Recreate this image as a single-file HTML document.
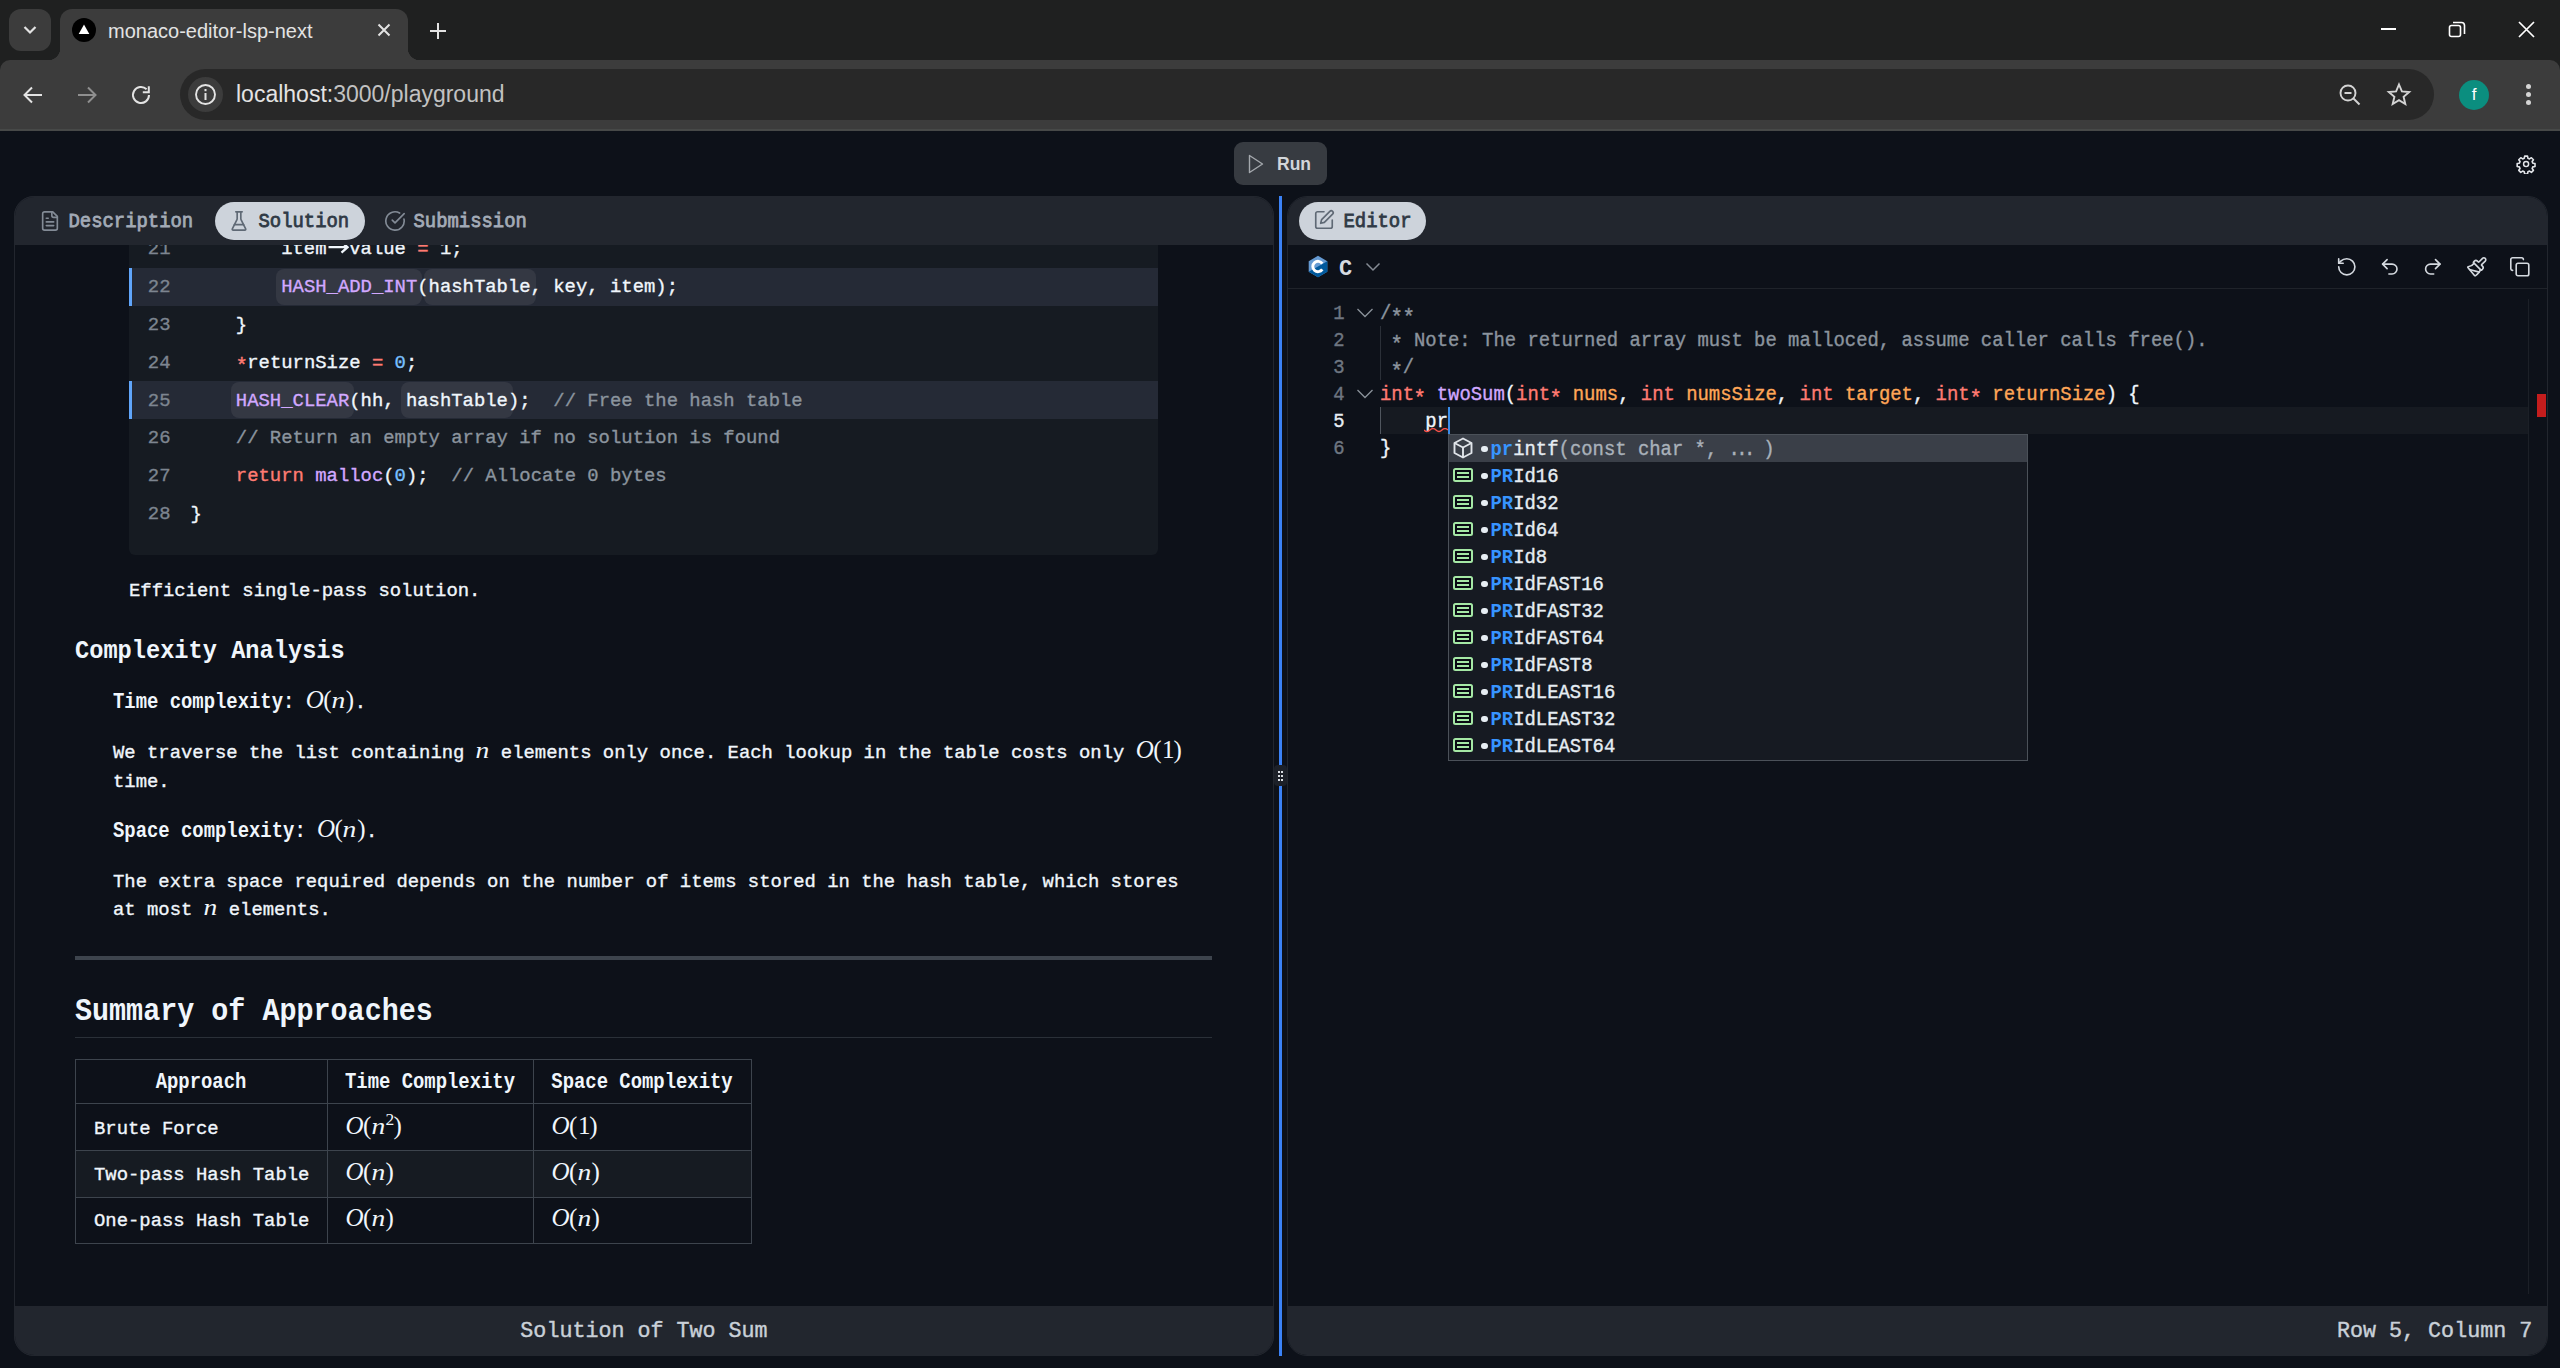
<!DOCTYPE html>
<html><head><meta charset="utf-8">
<style>
*{box-sizing:border-box;margin:0;padding:0}
html,body{width:2560px;height:1368px;overflow:hidden;background:#0d1119;font-family:"Liberation Mono",monospace;color:#e6edf3}
.abs{position:absolute}
svg{display:block}
/* chrome */
#tabstrip{left:0;top:0;width:2560px;height:72px;background:#1f2020}
#toolbar{left:0;top:60px;width:2560px;height:71px;background:#3c3c3c;border-bottom:2px solid #474948;border-radius:10px 10px 0 0}
#tab{left:60px;top:9px;width:348px;height:52px;background:#3c3c3c;border-radius:12px 12px 0 0}
.inv{width:12px;height:12px;background:#3c3c3c}
.sans{font-family:"Liberation Sans",sans-serif}
#omni{left:180px;top:69px;width:2254px;height:51px;background:#282828;border-radius:26px}
/* page */
.panel{background:#0d1119;border:1px solid #22262e;border-radius:20px;overflow:hidden}
.phead{position:absolute;left:0;top:0;right:0;height:48px;background:#22262e}
.pfoot{position:absolute;left:0;bottom:0;right:0;height:50px;background:#22262e}
.tab{position:absolute;top:6px;height:38px;border-radius:19px;font-size:18.9px;line-height:38px;color:#a3abb7;font-weight:bold}
.tab.on{background:#cdd3db;color:#2f3945}

.tl{font-size:18.9px;line-height:38px;color:#a3abb7;white-space:pre;-webkit-text-stroke:0.75px currentColor;transform:scaleY(1.08);transform-origin:0 24px}
.cl{font-size:18.9px;line-height:37.86px;white-space:pre;color:#f0f6fc;-webkit-text-stroke:0.35px currentColor}
.ln{color:#7d8590}
.md{color:#f0f6fc;white-space:pre;-webkit-text-stroke:0.35px currentColor}
.md b,.b{-webkit-text-stroke:0}
.math{-webkit-text-stroke:0;line-height:0}
.b{font-weight:bold}
.math{font-family:"Liberation Serif",serif;white-space:nowrap}
.ec{font-size:18.9px;line-height:27px;white-space:pre;padding-top:2px;-webkit-text-stroke:0.35px currentColor;transform:scaleY(1.08);transform-origin:0 20.5px}
.mono{font-family:"Liberation Mono",monospace}
.ast{position:relative;top:4px;display:inline-block;transform:scale(1.1)}
</style></head>
<body>
<!-- browser chrome -->
<div id="tabstrip" class="abs"></div>
<div id="toolbar" class="abs"></div>
<div class="abs" style="left:9px;top:9px;width:42px;height:42px;background:#3c3c3c;border-radius:12px"></div>
<svg class="abs" style="left:22px;top:24px" width="16" height="12" viewBox="0 0 16 12"><path d="M2.5 3 L8 8.5 L13.5 3" fill="none" stroke="#e3e3e3" stroke-width="2.2"/></svg>
<div id="tab" class="abs"></div>
<div class="abs" style="left:48px;top:48px;width:12px;height:12px;background:radial-gradient(circle at 0 0,transparent 12px,#3c3c3c 12.5px)"></div>
<div class="abs" style="left:408px;top:48px;width:12px;height:12px;background:radial-gradient(circle at 100% 0,transparent 12px,#3c3c3c 12.5px)"></div>
<svg class="abs" style="left:72px;top:18px" width="24" height="24" viewBox="0 0 24 24"><circle cx="12" cy="12" r="12" fill="#000"/><path d="M12 6.5 L17.3 16 L6.7 16 Z" fill="#fff"/></svg>
<div class="abs sans" style="left:108px;top:19px;font-size:20px;line-height:24px;color:#e3e3e3">monaco-editor-lsp-next</div>
<svg class="abs" style="left:377px;top:23px" width="14" height="14" viewBox="0 0 14 14"><path d="M1.5 1.5 L12.5 12.5 M12.5 1.5 L1.5 12.5" stroke="#e3e3e3" stroke-width="2"/></svg>
<svg class="abs" style="left:429px;top:22px" width="18" height="18" viewBox="0 0 18 18"><path d="M9 1 V17 M1 9 H17" stroke="#e3e3e3" stroke-width="2"/></svg>
<!-- window controls -->
<div class="abs" style="left:2381px;top:28px;width:15px;height:2px;background:#fff"></div>
<svg class="abs" style="left:2447px;top:20px" width="20" height="20" viewBox="0 0 20 20"><rect x="2.5" y="5.5" width="11" height="11" rx="2" fill="none" stroke="#fff" stroke-width="1.6"/><path d="M6 2.5 H14.5 A3 3 0 0 1 17.5 5.5 V14" fill="none" stroke="#fff" stroke-width="1.6"/></svg>
<svg class="abs" style="left:2517px;top:20px" width="19" height="19" viewBox="0 0 19 19"><path d="M2 2 L17 17 M17 2 L2 17" stroke="#fff" stroke-width="1.7"/></svg>
<!-- nav -->
<svg class="abs" style="left:21px;top:83px" width="24" height="24" viewBox="0 0 24 24"><path d="M21 12 H4 M11 4.5 L3.5 12 L11 19.5" fill="none" stroke="#e3e3e3" stroke-width="2"/></svg>
<svg class="abs" style="left:75px;top:83px" width="24" height="24" viewBox="0 0 24 24"><path d="M3 12 H20 M13 4.5 L20.5 12 L13 19.5" fill="none" stroke="#8f8f8f" stroke-width="2"/></svg>
<svg class="abs" style="left:129px;top:83px" width="24" height="24" viewBox="0 0 24 24"><path d="M20 12 A8 8 0 1 1 17.6 6.3" fill="none" stroke="#e3e3e3" stroke-width="2"/><path d="M19.8 3.2 V9.2 H13.8" fill="none" stroke="#e3e3e3" stroke-width="2"/></svg>
<div id="omni" class="abs"></div>
<div class="abs" style="left:188px;top:77px;width:35px;height:35px;border-radius:18px;background:#3c3c3c"></div>
<svg class="abs" style="left:193px;top:82px" width="25" height="25" viewBox="0 0 25 25"><circle cx="12.5" cy="12.5" r="9.5" fill="none" stroke="#e3e3e3" stroke-width="1.9"/><rect x="11.5" y="11" width="2" height="7" fill="#e3e3e3"/><rect x="11.5" y="7" width="2" height="2.2" fill="#e3e3e3"/></svg>
<div class="abs sans" style="left:236px;top:81px;font-size:23px;line-height:26px;color:#e3e3e3">localhost:<span style="color:#c2c2c2">3000/playground</span></div>
<svg class="abs" style="left:2336px;top:81px" width="26" height="26" viewBox="0 0 26 26"><circle cx="12" cy="12" r="7.5" fill="none" stroke="#d4d4d4" stroke-width="1.9"/><path d="M8.5 12 H15.5" stroke="#d4d4d4" stroke-width="2"/><path d="M17.5 17.5 L23.5 23.5" stroke="#d4d4d4" stroke-width="2"/></svg>
<svg class="abs" style="left:2386px;top:82px" width="26" height="26" viewBox="0 0 26 26"><path d="M13 2.5 L15.9 9.4 L23.2 10 L17.6 14.8 L19.3 22 L13 18.1 L6.7 22 L8.4 14.8 L2.8 10 L10.1 9.4 Z" fill="none" stroke="#d4d4d4" stroke-width="1.9" stroke-linejoin="miter"/></svg>
<div class="abs" style="left:2459px;top:80px;width:30px;height:30px;border-radius:15px;background:#0b8e7f"></div>
<div class="abs sans" style="left:2459px;top:83px;width:30px;text-align:center;font-size:17px;line-height:24px;color:#fff">f</div>
<div class="abs" style="left:2526px;top:84px;width:5px;height:5px;border-radius:3px;background:#d4d4d4"></div>
<div class="abs" style="left:2526px;top:92px;width:5px;height:5px;border-radius:3px;background:#d4d4d4"></div>
<div class="abs" style="left:2526px;top:100px;width:5px;height:5px;border-radius:3px;background:#d4d4d4"></div>

<!-- page top bar -->
<div class="abs" style="left:1234px;top:142px;width:93px;height:43px;border-radius:9px;background:#373b41"></div>
<svg class="abs" style="left:1246px;top:153px" width="20" height="22" viewBox="0 0 20 22"><path d="M3.5 2.5 L16.5 11 L3.5 19.5 Z" fill="none" stroke="#a4a8ad" stroke-width="1.4" stroke-linejoin="round"/></svg>
<div class="abs sans" style="left:1277px;top:151px;font-size:17.5px;line-height:26px;font-weight:bold;color:#d2d6da">Run</div>
<svg class="abs" style="left:2515.8px;top:153.9px" width="20.2" height="20.2" viewBox="0 0 24 24"><path fill="none" stroke="#e2e5e9" stroke-width="1.9" stroke-linejoin="round" d="M10.3 2.5h3.4l.5 2.6 1.9.8 2.2-1.5 2.4 2.4-1.5 2.2.8 1.9 2.6.5v3.4l-2.6.5-.8 1.9 1.5 2.2-2.4 2.4-2.2-1.5-1.9.8-.5 2.6h-3.4l-.5-2.6-1.9-.8-2.2 1.5-2.4-2.4 1.5-2.2-.8-1.9-2.6-.5v-3.4l2.6-.5.8-1.9-1.5-2.2 2.4-2.4 2.2 1.5 1.9-.8z"/><circle cx="12" cy="12" r="3" fill="none" stroke="#e2e5e9" stroke-width="1.7"/></svg>

<!-- LEFT PANEL -->
<div id="lp" class="abs panel" style="left:14px;top:196px;width:1260px;height:1160px"></div>
<div class="abs" style="left:15px;top:197px;width:1258px;height:48px;background:#22262e;border-radius:19px 19px 0 0"></div>
<div class="abs" style="left:15px;top:1306px;width:1258px;height:49px;background:#22262e;border-radius:0 0 19px 19px"></div>
<div class="abs" style="left:14px;top:196px;width:1260px;height:1160px;border-radius:20px;border:1px solid #22262e;pointer-events:none"></div>
<!-- left tabs -->
<svg class="abs" style="left:39px;top:210px" width="22" height="22" viewBox="0 0 24 24" fill="none" stroke="#838b96" stroke-width="1.8" stroke-linecap="round" stroke-linejoin="round"><path d="M15 2H6a2 2 0 0 0-2 2v16a2 2 0 0 0 2 2h12a2 2 0 0 0 2-2V7Z"/><path d="M14 2v4a2 2 0 0 0 2 2h4"/><path d="M10 9H8"/><path d="M16 13H8"/><path d="M16 17H8"/></svg>
<div class="abs tl" style="left:68.5px;top:203px">Description</div>
<div class="abs" style="left:215px;top:202px;width:150px;height:38px;border-radius:19px;background:#cdd3db"></div>
<svg class="abs" style="left:228px;top:209.75px" width="22" height="22" viewBox="0 0 24 24" fill="none" stroke="#5f6975" stroke-width="1.8" stroke-linecap="round" stroke-linejoin="round"><path d="M10 2v7.527a2 2 0 0 1-.211.896L4.72 20.55a1 1 0 0 0 .9 1.45h12.76a1 1 0 0 0 .9-1.45l-5.069-10.127A2 2 0 0 1 14 9.527V2"/><path d="M8.5 2h7"/><path d="M7 16h10"/></svg>
<div class="abs tl" style="left:258.5px;top:203px;color:#2f3945">Solution</div>
<svg class="abs" style="left:383.5px;top:210px" width="22" height="22" viewBox="0 0 24 24" fill="none" stroke="#838b96" stroke-width="1.8" stroke-linecap="round" stroke-linejoin="round"><path d="M21.801 10A10 10 0 1 1 17 3.335"/><path d="m9 11 3 3L22 4"/></svg>
<div class="abs tl" style="left:413.5px;top:203px">Submission</div>
<!-- left content clip -->
<div class="abs" style="left:15px;top:245px;width:1258px;height:1061px;overflow:hidden">
<div class="abs" style="left:-15px;top:-245px;width:2560px;height:1368px">
<div class="abs" style="left:129px;top:200px;width:1029px;height:355px;background:#161b22;border-radius:6px"></div>
<div class="abs" style="left:129px;top:267.66px;width:1029px;height:37.86px;background:#252a36"></div>
<div class="abs" style="left:129px;top:267.66px;width:2.5px;height:37.86px;background:#60a5fa"></div>
<div class="abs" style="left:129px;top:381.24px;width:1029px;height:37.86px;background:#252a36"></div>
<div class="abs" style="left:129px;top:381.24px;width:2.5px;height:37.86px;background:#60a5fa"></div>
<div class="abs" style="left:276.22px;top:268.66px;width:146.08px;height:35.86px;background:#343843;border-radius:8px"></div>
<div class="abs" style="left:423.64px;top:268.66px;width:112.06px;height:35.86px;background:#343843;border-radius:8px"></div>
<div class="abs" style="left:230.86px;top:382.24px;width:123.40px;height:35.86px;background:#343843;border-radius:8px"></div>
<div class="abs" style="left:400.96px;top:382.24px;width:112.06px;height:35.86px;background:#343843;border-radius:8px"></div>
<div class="abs cl ln" style="left:120px;top:231.10px;width:50.5px;text-align:right">21</div>
<div class="abs cl" style="left:190.5px;top:231.10px"><span style="color:#f0f6fc">        item</span><svg style="display:inline-block;vertical-align:0px" width="22.68" height="14" viewBox="0 0 22.68 14"><path d="M1.5 7.2 H20.5 M14.5 1.8 L20.5 7.2 L14.5 12.6" fill="none" stroke="#f0f6fc" stroke-width="2.3"/></svg><span style="color:#f0f6fc">value </span><span style="color:#ff7b72">=</span><span style="color:#f0f6fc"> 1;</span></div>
<div class="abs cl ln" style="left:120px;top:268.96px;width:50.5px;text-align:right">22</div>
<div class="abs cl" style="left:190.5px;top:268.96px"><span style="color:#f0f6fc">        </span><span style="color:#d2a8ff">HASH_ADD_INT</span><span style="color:#f0f6fc">(hashTable, key, item);</span></div>
<div class="abs cl ln" style="left:120px;top:306.82px;width:50.5px;text-align:right">23</div>
<div class="abs cl" style="left:190.5px;top:306.82px"><span style="color:#f0f6fc">    }</span></div>
<div class="abs cl ln" style="left:120px;top:344.68px;width:50.5px;text-align:right">24</div>
<div class="abs cl" style="left:190.5px;top:344.68px"><span style="color:#f0f6fc">    </span><span style="color:#ff7b72"><span class="ast">*</span></span><span style="color:#f0f6fc">returnSize </span><span style="color:#ff7b72">=</span><span style="color:#f0f6fc"> </span><span style="color:#79c0ff">0</span><span style="color:#f0f6fc">;</span></div>
<div class="abs cl ln" style="left:120px;top:382.54px;width:50.5px;text-align:right">25</div>
<div class="abs cl" style="left:190.5px;top:382.54px"><span style="color:#f0f6fc">    </span><span style="color:#d2a8ff">HASH_CLEAR</span><span style="color:#f0f6fc">(hh, hashTable);  </span><span style="color:#8b949e">// Free the hash table</span></div>
<div class="abs cl ln" style="left:120px;top:420.40px;width:50.5px;text-align:right">26</div>
<div class="abs cl" style="left:190.5px;top:420.40px"><span style="color:#f0f6fc">    </span><span style="color:#8b949e">// Return an empty array if no solution is found</span></div>
<div class="abs cl ln" style="left:120px;top:458.26px;width:50.5px;text-align:right">27</div>
<div class="abs cl" style="left:190.5px;top:458.26px"><span style="color:#f0f6fc">    </span><span style="color:#ff7b72">return</span><span style="color:#f0f6fc"> </span><span style="color:#d2a8ff">malloc</span><span style="color:#f0f6fc">(</span><span style="color:#79c0ff">0</span><span style="color:#f0f6fc">);  </span><span style="color:#8b949e">// Allocate 0 bytes</span></div>
<div class="abs cl ln" style="left:120px;top:496.12px;width:50.5px;text-align:right">28</div>
<div class="abs cl" style="left:190.5px;top:496.12px"><span style="color:#f0f6fc">}</span></div>
<div class="abs md" style="left:129px;top:576.77px;font-size:18.9px;line-height:28.4px;">Efficient single-pass solution.</div>
<div class="abs md b" style="left:75px;top:637.40px;font-size:23.66px;line-height:30px;transform:scaleY(1.12);transform-origin:0 21.30px;">Complexity Analysis</div>
<div class="abs md" style="left:113px;top:689.47px;font-size:18.9px;line-height:28.4px;"><b style="display:inline-block;transform:scaleY(1.12);transform-origin:0 19.23px">Time complexity:</b> <span class="math" style="font-size:25px"><span style="display:inline-block;width:17.47px;font-style:italic;">O</span><span style="display:inline-block;width:8.91px;">(</span><span style="display:inline-block;width:13.74px;font-style:italic;transform:scale(1.1,0.95);transform-origin:30% 80%;">n</span><span style="display:inline-block;width:8.91px;">)</span></span>.</div>
<div class="abs md" style="left:113px;top:739.27px;font-size:18.9px;line-height:28.4px;">We traverse the list containing <span class="math" style="font-size:25px"><span style="display:inline-block;width:13.74px;font-style:italic;transform:scale(1.1,0.95);transform-origin:30% 80%;">n</span></span> elements only once. Each lookup in the table costs only <span class="math" style="font-size:25px"><span style="display:inline-block;width:17.47px;font-style:italic;">O</span><span style="display:inline-block;width:8.91px;">(</span><span style="display:inline-block;width:11.45px;">1</span><span style="display:inline-block;width:8.91px;">)</span></span></div>
<div class="abs md" style="left:113px;top:767.67px;font-size:18.9px;line-height:28.4px;">time.</div>
<div class="abs md" style="left:113px;top:818.27px;font-size:18.9px;line-height:28.4px;"><b style="display:inline-block;transform:scaleY(1.12);transform-origin:0 19.23px">Space complexity:</b> <span class="math" style="font-size:25px"><span style="display:inline-block;width:17.47px;font-style:italic;">O</span><span style="display:inline-block;width:8.91px;">(</span><span style="display:inline-block;width:13.74px;font-style:italic;transform:scale(1.1,0.95);transform-origin:30% 80%;">n</span><span style="display:inline-block;width:8.91px;">)</span></span>.</div>
<div class="abs md" style="left:113px;top:867.57px;font-size:18.9px;line-height:28.4px;">The extra space required depends on the number of items stored in the hash table, which stores</div>
<div class="abs md" style="left:113px;top:895.67px;font-size:18.9px;line-height:28.4px;">at most <span class="math" style="font-size:25px"><span style="display:inline-block;width:13.74px;font-style:italic;transform:scale(1.1,0.95);transform-origin:30% 80%;">n</span></span> elements.</div>
<div class="abs" style="left:75px;top:956px;width:1137px;height:4px;background:#3d444d"></div>
<div class="abs md b" style="left:75px;top:994.94px;font-size:28.4px;line-height:36px;transform:scaleY(1.12);transform-origin:0 25.56px;">Summary of Approaches</div>
<div class="abs" style="left:75px;top:1037px;width:1137px;height:1px;background:#2a3038"></div>
<div class="abs" style="left:76px;top:1151px;width:675px;height:46px;background:#161b22"></div>
<div class="abs" style="left:75px;top:1059px;width:677px;height:1px;background:#3d444d"></div>
<div class="abs" style="left:75px;top:1103px;width:677px;height:1px;background:#3d444d"></div>
<div class="abs" style="left:75px;top:1150px;width:677px;height:1px;background:#3d444d"></div>
<div class="abs" style="left:75px;top:1197px;width:677px;height:1px;background:#3d444d"></div>
<div class="abs" style="left:75px;top:1243px;width:677px;height:1px;background:#3d444d"></div>
<div class="abs" style="left:75px;top:1059px;width:1px;height:185px;background:#3d444d"></div>
<div class="abs" style="left:327px;top:1059px;width:1px;height:185px;background:#3d444d"></div>
<div class="abs" style="left:533px;top:1059px;width:1px;height:185px;background:#3d444d"></div>
<div class="abs" style="left:751px;top:1059px;width:1px;height:185px;background:#3d444d"></div>
<div class="abs md b" style="left:75px;top:1069.17px;font-size:18.9px;line-height:28.4px;transform:scaleY(1.12);transform-origin:0 19.23px;"><div style="width:252px;text-align:center">Approach</div></div>
<div class="abs md b" style="left:345px;top:1069.17px;font-size:18.9px;line-height:28.4px;transform:scaleY(1.12);transform-origin:0 19.23px;">Time Complexity</div>
<div class="abs md b" style="left:551.3px;top:1069.17px;font-size:18.9px;line-height:28.4px;transform:scaleY(1.12);transform-origin:0 19.23px;">Space Complexity</div>
<div class="abs md" style="left:94px;top:1114.52px;font-size:18.9px;line-height:28.4px;">Brute Force</div>
<div class="abs md" style="left:345.5px;top:1114.52px;font-size:18.9px;line-height:28.4px;"><span class="math" style="font-size:25px"><span style="display:inline-block;width:17.47px;font-style:italic;">O</span><span style="display:inline-block;width:8.91px;">(</span><span style="display:inline-block;width:13.74px;font-style:italic;transform:scale(1.1,0.95);transform-origin:30% 80%;">n</span><span style="display:inline-block;width:8.01px;font-style:normal;"><span style="font-size:0.7em;position:relative;top:-0.5em">2</span></span><span style="display:inline-block;width:8.91px;">)</span></span></div>
<div class="abs md" style="left:551.5px;top:1114.52px;font-size:18.9px;line-height:28.4px;"><span class="math" style="font-size:25px"><span style="display:inline-block;width:17.47px;font-style:italic;">O</span><span style="display:inline-block;width:8.91px;">(</span><span style="display:inline-block;width:11.45px;">1</span><span style="display:inline-block;width:8.91px;">)</span></span></div>
<div class="abs md" style="left:94px;top:1161.07px;font-size:18.9px;line-height:28.4px;">Two-pass Hash Table</div>
<div class="abs md" style="left:345.5px;top:1161.07px;font-size:18.9px;line-height:28.4px;"><span class="math" style="font-size:25px"><span style="display:inline-block;width:17.47px;font-style:italic;">O</span><span style="display:inline-block;width:8.91px;">(</span><span style="display:inline-block;width:13.74px;font-style:italic;transform:scale(1.1,0.95);transform-origin:30% 80%;">n</span><span style="display:inline-block;width:8.91px;">)</span></span></div>
<div class="abs md" style="left:551.5px;top:1161.07px;font-size:18.9px;line-height:28.4px;"><span class="math" style="font-size:25px"><span style="display:inline-block;width:17.47px;font-style:italic;">O</span><span style="display:inline-block;width:8.91px;">(</span><span style="display:inline-block;width:13.74px;font-style:italic;transform:scale(1.1,0.95);transform-origin:30% 80%;">n</span><span style="display:inline-block;width:8.91px;">)</span></span></div>
<div class="abs md" style="left:94px;top:1207.37px;font-size:18.9px;line-height:28.4px;">One-pass Hash Table</div>
<div class="abs md" style="left:345.5px;top:1207.37px;font-size:18.9px;line-height:28.4px;"><span class="math" style="font-size:25px"><span style="display:inline-block;width:17.47px;font-style:italic;">O</span><span style="display:inline-block;width:8.91px;">(</span><span style="display:inline-block;width:13.74px;font-style:italic;transform:scale(1.1,0.95);transform-origin:30% 80%;">n</span><span style="display:inline-block;width:8.91px;">)</span></span></div>
<div class="abs md" style="left:551.5px;top:1207.37px;font-size:18.9px;line-height:28.4px;"><span class="math" style="font-size:25px"><span style="display:inline-block;width:17.47px;font-style:italic;">O</span><span style="display:inline-block;width:8.91px;">(</span><span style="display:inline-block;width:13.74px;font-style:italic;transform:scale(1.1,0.95);transform-origin:30% 80%;">n</span><span style="display:inline-block;width:8.91px;">)</span></span></div>
</div></div>
<div class="abs mono" style="left:14px;top:1306px;width:1260px;height:52px;text-align:center;font-size:21.7px;line-height:52px;color:#c9d0d8;-webkit-text-stroke:0.4px currentColor">Solution of Two Sum</div>

<!-- divider -->
<div class="abs" style="left:1279px;top:196px;width:3px;height:1160px;background:#3b82f6"></div>
<div class="abs" style="left:1274px;top:765px;width:13px;height:21px;border-radius:4px;background:#1c2028"></div>
<div class="abs" style="left:1278px;top:771px;width:2px;height:2px;background:#d8dce2;box-shadow:3px 0 #d8dce2,0 4px #d8dce2,3px 4px #d8dce2,0 8px #d8dce2,3px 8px #d8dce2"></div>

<!-- RIGHT PANEL -->
<div id="rp" class="abs panel" style="left:1287px;top:196px;width:1261px;height:1160px"></div>
<div class="abs" style="left:1288px;top:197px;width:1259px;height:48px;background:#22262e;border-radius:19px 19px 0 0"></div>
<div class="abs" style="left:1288px;top:1306px;width:1259px;height:49px;background:#22262e;border-radius:0 0 19px 19px"></div>
<div class="abs mono" style="left:2337px;top:1306px;width:200px;height:52px;font-size:21.7px;line-height:52px;color:#c9d0d8;-webkit-text-stroke:0.4px currentColor">Row 5, Column 7</div>
<div class="abs" style="left:1299px;top:202px;width:127px;height:38px;border-radius:19px;background:#cdd3db"></div>
<svg class="abs" style="left:1313.25px;top:209.3px" width="22" height="22" viewBox="0 0 24 24" fill="none" stroke="#5f6975" stroke-width="1.8" stroke-linecap="round" stroke-linejoin="round"><path d="M12 3H5a2 2 0 0 0-2 2v14a2 2 0 0 0 2 2h14a2 2 0 0 0 2-2v-7"/><path d="M18.375 2.625a1 1 0 0 1 3 3l-9 9-4 1 1-4Z"/></svg>
<div class="abs tl" style="left:1343.5px;top:203px;color:#2f3945">Editor</div>
<div class="abs" style="left:1288px;top:288px;width:1259px;height:1px;background:#1f232a"></div>
<svg class="abs" style="left:1307px;top:255px" width="22" height="23" viewBox="0 0 22 23"><path d="M11 0.8 L20.3 6.2 V16.8 L11 22.2 L1.7 16.8 V6.2 Z" fill="#659ad2"/><path d="M20.3 6.2 V16.8 L11 22.2 L1.7 16.8 Z" fill="#00599c"/><path d="M15.3 8.6 A5.2 5.2 0 1 0 15.3 14.4" fill="none" stroke="#fff" stroke-width="2.9"/></svg>
<div class="abs mono" style="left:1339px;top:254.5px;font-size:22px;line-height:30px;font-weight:bold;color:#d6dbe1">C</div>
<svg class="abs" style="left:1365px;top:261px" width="16" height="12" viewBox="0 0 16 12"><path d="M1.5 2.5 L8 9 L14.5 2.5" fill="none" stroke="#858b94" stroke-width="1.5"/></svg>
<svg class="abs" style="left:2335.8px;top:255.9px" width="21.6" height="21.6" viewBox="0 0 24 24" fill="none" stroke="#d4d9df" stroke-width="1.8" stroke-linecap="round" stroke-linejoin="round"><path d="M3 12a9 9 0 1 0 9-9 9.75 9.75 0 0 0-6.74 2.74L3 8"/><path d="M3 3v5h5"/></svg>
<svg class="abs" style="left:2379px;top:255.9px" width="21.6" height="21.6" viewBox="0 0 24 24" fill="none" stroke="#d4d9df" stroke-width="1.8" stroke-linecap="round" stroke-linejoin="round"><path d="M9 14 4 9l5-5"/><path d="M4 9h10.5a5.5 5.5 0 0 1 5.5 5.5a5.5 5.5 0 0 1-5.5 5.5H11"/></svg>
<svg class="abs" style="left:2421.9px;top:255.9px" width="21.6" height="21.6" viewBox="0 0 24 24" fill="none" stroke="#d4d9df" stroke-width="1.8" stroke-linecap="round" stroke-linejoin="round"><path d="m15 14 5-5-5-5"/><path d="M20 9H9.5A5.5 5.5 0 0 0 4 14.5A5.5 5.5 0 0 0 9.5 20H13"/></svg>
<svg class="abs" style="left:2466.2px;top:255.9px" width="21.6" height="21.6" viewBox="0 0 24 24" fill="none" stroke="#d4d9df" stroke-width="1.8" stroke-linecap="round" stroke-linejoin="round"><path d="m14.622 17.897-10.68-2.913"/><path d="M18.376 2.622a1 1 0 1 1 3.002 3.002L17.36 9.643a.5.5 0 0 0 0 .707l.944.944a2.41 2.41 0 0 1 0 3.408l-.944.944a.5.5 0 0 1-.707 0L8.354 7.348a.5.5 0 0 1 0-.707l.944-.944a2.41 2.41 0 0 1 3.408 0l.944.944a.5.5 0 0 0 .707 0z"/><path d="M9 8c-1.804 2.71-3.97 3.46-6.583 3.948a.507.507 0 0 0-.302.819l7.32 8.883a1 1 0 0 0 1.185.204C12.735 20.405 16 16.792 16 15"/></svg>
<svg class="abs" style="left:2509.2px;top:255.9px" width="21.6" height="21.6" viewBox="0 0 24 24" fill="none" stroke="#d4d9df" stroke-width="1.8" stroke-linecap="round" stroke-linejoin="round"><rect width="14" height="14" x="8" y="8" rx="2" ry="2"/><path d="M4 16c-1.1 0-2-.9-2-2V4c0-1.1.9-2 2-2h10c1.1 0 2 .9 2 2"/></svg>
<div class="abs" style="left:1380px;top:407px;width:1148px;height:27px;background:#161a21"></div>
<div class="abs" style="left:1380px;top:326px;width:1px;height:54px;background:#2b3038"></div>
<div class="abs" style="left:1380px;top:407px;width:1px;height:27px;background:#50565e"></div>
<div class="abs ec" style="left:1300px;top:299px;width:44.5px;text-align:right;color:#6e7681">1</div>
<div class="abs ec" style="left:1300px;top:326px;width:44.5px;text-align:right;color:#6e7681">2</div>
<div class="abs ec" style="left:1300px;top:353px;width:44.5px;text-align:right;color:#6e7681">3</div>
<div class="abs ec" style="left:1300px;top:380px;width:44.5px;text-align:right;color:#6e7681">4</div>
<div class="abs ec" style="left:1300px;top:407px;width:44.5px;text-align:right;color:#e6edf3">5</div>
<div class="abs ec" style="left:1300px;top:434px;width:44.5px;text-align:right;color:#6e7681">6</div>
<svg class="abs" style="left:1356px;top:307px" width="18" height="12" viewBox="0 0 18 12"><path d="M1.5 2 L9 9.5 L16.5 2" fill="none" stroke="#8b929a" stroke-width="1.3"/></svg>
<svg class="abs" style="left:1356px;top:388px" width="18" height="12" viewBox="0 0 18 12"><path d="M1.5 2 L9 9.5 L16.5 2" fill="none" stroke="#8b929a" stroke-width="1.3"/></svg>
<div class="abs ec" style="left:1380px;top:299px"><span style="color:#8b949e">/<span class="ast">*</span><span class="ast">*</span></span></div>
<div class="abs ec" style="left:1380px;top:326px"><span style="color:#8b949e"> <span class="ast">*</span> Note: The returned array must be malloced, assume caller calls free().</span></div>
<div class="abs ec" style="left:1380px;top:353px"><span style="color:#8b949e"> <span class="ast">*</span>/</span></div>
<div class="abs ec" style="left:1380px;top:380px"><span style="color:#ff7b72">int<span class="ast">*</span></span><span style="color:#f0f6fc"> </span><span style="color:#d2a8ff">twoSum</span><span style="color:#f0f6fc">(</span><span style="color:#ff7b72">int<span class="ast">*</span></span><span style="color:#ffa657"> nums</span><span style="color:#f0f6fc">, </span><span style="color:#ff7b72">int</span><span style="color:#ffa657"> numsSize</span><span style="color:#f0f6fc">, </span><span style="color:#ff7b72">int</span><span style="color:#ffa657"> target</span><span style="color:#f0f6fc">, </span><span style="color:#ff7b72">int<span class="ast">*</span></span><span style="color:#ffa657"> returnSize</span><span style="color:#f0f6fc">) {</span></div>
<div class="abs ec" style="left:1380px;top:407px"><span style="color:#f0f6fc">    pr</span></div>
<div class="abs ec" style="left:1380px;top:434px"><span style="color:#f0f6fc">}</span></div>
<svg class="abs" style="left:1424px;top:428px" width="24" height="6" viewBox="0 0 24 6"><path d="M0 2 Q3 5 6 2 T12 2 T18 2 T24 2" fill="none" stroke="#f85149" stroke-width="1.3"/></svg>
<div class="abs" style="left:1447.5px;top:407px;width:2px;height:27px;background:#3b8eea"></div>
<div class="abs" style="left:2528px;top:299px;width:1px;height:995px;background:#1c2027"></div>
<div class="abs" style="left:2537px;top:394px;width:9px;height:23px;background:#c41d1d"></div>
<div class="abs" style="left:1448px;top:434px;width:580px;height:327px;background:#161a22;border:1px solid #4b5159"></div>
<div class="abs" style="left:1449px;top:435px;width:578px;height:27px;background:#3a3f48"></div>
<svg class="abs" style="left:1451px;top:436px" width="24" height="24" viewBox="0 0 24 24" fill="none" stroke="#e1e5ea" stroke-width="1.9" stroke-linejoin="round"><path d="M12 2.5 L20.5 7 V17 L12 21.5 L3.5 17 V7 Z"/><path d="M3.5 7 L12 11.5 L20.5 7"/><path d="M12 11.5 V21.5"/></svg>
<div class="abs" style="left:1481px;top:445.5px;width:6.5px;height:6.5px;border-radius:50%;background:#e6edf3"></div>
<div class="abs ec sg" style="left:1490.5px;top:435px"><span style="color:#3794ff;font-weight:bold;-webkit-text-stroke:0">pr</span><span style="color:#e6edf3">intf</span><span style="color:#a9b1ba">(const char *, <span style="letter-spacing:-3.6px">...</span> )</span></div>
<div class="abs" style="left:1453px;top:468px;width:20px;height:14px;border:2px solid #a5e8a5;border-radius:2.5px;background:#0a0b14"></div>
<div class="abs" style="left:1457px;top:472px;width:12px;height:2px;background:#a5e8a5;box-shadow:0 4px #a5e8a5"></div>
<div class="abs" style="left:1481px;top:472.5px;width:6.5px;height:6.5px;border-radius:50%;background:#e6edf3"></div>
<div class="abs ec sg" style="left:1490.5px;top:462px"><span style="color:#3794ff;font-weight:bold;-webkit-text-stroke:0">PR</span><span style="color:#e6edf3">Id16</span></div>
<div class="abs" style="left:1453px;top:495px;width:20px;height:14px;border:2px solid #a5e8a5;border-radius:2.5px;background:#0a0b14"></div>
<div class="abs" style="left:1457px;top:499px;width:12px;height:2px;background:#a5e8a5;box-shadow:0 4px #a5e8a5"></div>
<div class="abs" style="left:1481px;top:499.5px;width:6.5px;height:6.5px;border-radius:50%;background:#e6edf3"></div>
<div class="abs ec sg" style="left:1490.5px;top:489px"><span style="color:#3794ff;font-weight:bold;-webkit-text-stroke:0">PR</span><span style="color:#e6edf3">Id32</span></div>
<div class="abs" style="left:1453px;top:522px;width:20px;height:14px;border:2px solid #a5e8a5;border-radius:2.5px;background:#0a0b14"></div>
<div class="abs" style="left:1457px;top:526px;width:12px;height:2px;background:#a5e8a5;box-shadow:0 4px #a5e8a5"></div>
<div class="abs" style="left:1481px;top:526.5px;width:6.5px;height:6.5px;border-radius:50%;background:#e6edf3"></div>
<div class="abs ec sg" style="left:1490.5px;top:516px"><span style="color:#3794ff;font-weight:bold;-webkit-text-stroke:0">PR</span><span style="color:#e6edf3">Id64</span></div>
<div class="abs" style="left:1453px;top:549px;width:20px;height:14px;border:2px solid #a5e8a5;border-radius:2.5px;background:#0a0b14"></div>
<div class="abs" style="left:1457px;top:553px;width:12px;height:2px;background:#a5e8a5;box-shadow:0 4px #a5e8a5"></div>
<div class="abs" style="left:1481px;top:553.5px;width:6.5px;height:6.5px;border-radius:50%;background:#e6edf3"></div>
<div class="abs ec sg" style="left:1490.5px;top:543px"><span style="color:#3794ff;font-weight:bold;-webkit-text-stroke:0">PR</span><span style="color:#e6edf3">Id8</span></div>
<div class="abs" style="left:1453px;top:576px;width:20px;height:14px;border:2px solid #a5e8a5;border-radius:2.5px;background:#0a0b14"></div>
<div class="abs" style="left:1457px;top:580px;width:12px;height:2px;background:#a5e8a5;box-shadow:0 4px #a5e8a5"></div>
<div class="abs" style="left:1481px;top:580.5px;width:6.5px;height:6.5px;border-radius:50%;background:#e6edf3"></div>
<div class="abs ec sg" style="left:1490.5px;top:570px"><span style="color:#3794ff;font-weight:bold;-webkit-text-stroke:0">PR</span><span style="color:#e6edf3">IdFAST16</span></div>
<div class="abs" style="left:1453px;top:603px;width:20px;height:14px;border:2px solid #a5e8a5;border-radius:2.5px;background:#0a0b14"></div>
<div class="abs" style="left:1457px;top:607px;width:12px;height:2px;background:#a5e8a5;box-shadow:0 4px #a5e8a5"></div>
<div class="abs" style="left:1481px;top:607.5px;width:6.5px;height:6.5px;border-radius:50%;background:#e6edf3"></div>
<div class="abs ec sg" style="left:1490.5px;top:597px"><span style="color:#3794ff;font-weight:bold;-webkit-text-stroke:0">PR</span><span style="color:#e6edf3">IdFAST32</span></div>
<div class="abs" style="left:1453px;top:630px;width:20px;height:14px;border:2px solid #a5e8a5;border-radius:2.5px;background:#0a0b14"></div>
<div class="abs" style="left:1457px;top:634px;width:12px;height:2px;background:#a5e8a5;box-shadow:0 4px #a5e8a5"></div>
<div class="abs" style="left:1481px;top:634.5px;width:6.5px;height:6.5px;border-radius:50%;background:#e6edf3"></div>
<div class="abs ec sg" style="left:1490.5px;top:624px"><span style="color:#3794ff;font-weight:bold;-webkit-text-stroke:0">PR</span><span style="color:#e6edf3">IdFAST64</span></div>
<div class="abs" style="left:1453px;top:657px;width:20px;height:14px;border:2px solid #a5e8a5;border-radius:2.5px;background:#0a0b14"></div>
<div class="abs" style="left:1457px;top:661px;width:12px;height:2px;background:#a5e8a5;box-shadow:0 4px #a5e8a5"></div>
<div class="abs" style="left:1481px;top:661.5px;width:6.5px;height:6.5px;border-radius:50%;background:#e6edf3"></div>
<div class="abs ec sg" style="left:1490.5px;top:651px"><span style="color:#3794ff;font-weight:bold;-webkit-text-stroke:0">PR</span><span style="color:#e6edf3">IdFAST8</span></div>
<div class="abs" style="left:1453px;top:684px;width:20px;height:14px;border:2px solid #a5e8a5;border-radius:2.5px;background:#0a0b14"></div>
<div class="abs" style="left:1457px;top:688px;width:12px;height:2px;background:#a5e8a5;box-shadow:0 4px #a5e8a5"></div>
<div class="abs" style="left:1481px;top:688.5px;width:6.5px;height:6.5px;border-radius:50%;background:#e6edf3"></div>
<div class="abs ec sg" style="left:1490.5px;top:678px"><span style="color:#3794ff;font-weight:bold;-webkit-text-stroke:0">PR</span><span style="color:#e6edf3">IdLEAST16</span></div>
<div class="abs" style="left:1453px;top:711px;width:20px;height:14px;border:2px solid #a5e8a5;border-radius:2.5px;background:#0a0b14"></div>
<div class="abs" style="left:1457px;top:715px;width:12px;height:2px;background:#a5e8a5;box-shadow:0 4px #a5e8a5"></div>
<div class="abs" style="left:1481px;top:715.5px;width:6.5px;height:6.5px;border-radius:50%;background:#e6edf3"></div>
<div class="abs ec sg" style="left:1490.5px;top:705px"><span style="color:#3794ff;font-weight:bold;-webkit-text-stroke:0">PR</span><span style="color:#e6edf3">IdLEAST32</span></div>
<div class="abs" style="left:1453px;top:738px;width:20px;height:14px;border:2px solid #a5e8a5;border-radius:2.5px;background:#0a0b14"></div>
<div class="abs" style="left:1457px;top:742px;width:12px;height:2px;background:#a5e8a5;box-shadow:0 4px #a5e8a5"></div>
<div class="abs" style="left:1481px;top:742.5px;width:6.5px;height:6.5px;border-radius:50%;background:#e6edf3"></div>
<div class="abs ec sg" style="left:1490.5px;top:732px"><span style="color:#3794ff;font-weight:bold;-webkit-text-stroke:0">PR</span><span style="color:#e6edf3">IdLEAST64</span></div>
</body></html>
